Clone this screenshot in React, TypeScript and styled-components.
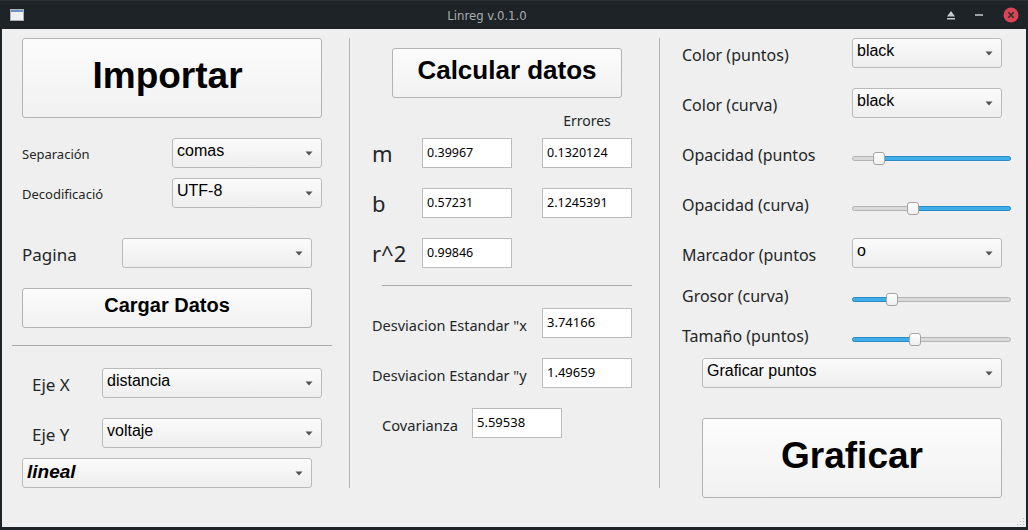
import React from "react";
import styled, { createGlobalStyle } from "styled-components";

const Global = createGlobalStyle`
  html, body { margin: 0; padding: 0; background: #1d2326; }
  body { width: 1028px; height: 530px; overflow: hidden; }
  * { box-sizing: border-box; }
`;

const Window = styled.div`
  width: 1028px;
  height: 530px;
  display: flex;
  flex-direction: column;
  background: #1d2326;
`;

const TitleBar = styled.div`
  height: 29px;
  flex-shrink: 0;
  display: flex;
  align-items: center;
  border-top: 1px solid #2a3034;
`;

const TitleIconBox = styled.div`
  width: 30px;
  display: flex;
  align-items: center;
  padding-left: 10px;
`;

const TitleText = styled.div`
  flex: 1;
  text-align: center;
  font-family: "DejaVu Sans Condensed", "DejaVu Sans", sans-serif;
  font-stretch: condensed;
  font-size: 13px;
  color: #a8adb1;
`;

const TitleButtons = styled.div`
  width: 84px;
  display: flex;
  align-items: center;
  padding-left: 2px;
`;

const TBIcon = styled.svg<{ $ml: number }>`
  margin-left: ${(p) => p.$ml}px;
  display: block;
  flex-shrink: 0;
`;

const Body = styled.div`
  margin: 0 2px 3px 2px;
  height: 498px;
  background: #efefef;
  display: flex;
  align-items: flex-start;
  position: relative;
  font-family: "Noto Sans", sans-serif;
  color: #232627;
`;

const Column = styled.div<{ $w: number }>`
  width: ${(p) => p.$w}px;
  flex-shrink: 0;
  display: flex;
  flex-direction: column;
  align-items: flex-start;
`;

const VDivider = styled.div`
  width: 1px;
  height: 450px;
  margin-top: 9px;
  background: #b4b4b4;
  flex-shrink: 0;
`;

const HLine = styled.div<{ $mt: number; $ml: number; $w: number }>`
  height: 1px;
  width: ${(p) => p.$w}px;
  margin-top: ${(p) => p.$mt}px;
  margin-left: ${(p) => p.$ml}px;
  background: #a9a9a9;
  flex-shrink: 0;
`;

const PushButton = styled.div<{ $w: number; $h: number; $size: number; $mt: number; $ml: number; $shift?: number }>`
  width: ${(p) => p.$w}px;
  height: ${(p) => p.$h}px;
  margin-top: ${(p) => p.$mt}px;
  margin-left: ${(p) => p.$ml}px;
  flex-shrink: 0;
  border: 1px solid #b3b3b3;
  border-radius: 3px;
  background: linear-gradient(#fcfcfc, #f1f1f1);
  font-family: "Liberation Sans", Arial, sans-serif;
  font-weight: bold;
  font-size: ${(p) => p.$size}px;
  color: #000;
  display: flex;
  align-items: center;
  justify-content: center;
  padding: 0 ${(p) => p.$shift ?? 0}px 5px 0;
`;

const Row = styled.div<{ $mt: number; $pl: number }>`
  display: flex;
  align-items: center;
  height: 30px;
  margin-top: ${(p) => p.$mt}px;
  padding-left: ${(p) => p.$pl}px;
  flex-shrink: 0;
`;

const Label = styled.span<{ $w: number; $size: number; $dy?: number }>`
  width: ${(p) => p.$w}px;
  font-size: ${(p) => p.$size}px;
  padding-top: ${(p) => p.$dy ?? 0}px;
  white-space: nowrap;
  overflow: hidden;
  flex-shrink: 0;
`;

const ComboBox = styled.div<{ $w: number; $mt?: number; $ml?: number }>`
  width: ${(p) => p.$w}px;
  height: 30px;
  margin-top: ${(p) => p.$mt ?? 0}px;
  margin-left: ${(p) => p.$ml ?? 0}px;
  flex-shrink: 0;
  border: 1px solid #bababa;
  border-radius: 3px;
  background: linear-gradient(#fbfbfb, #eeeeee);
  display: flex;
  align-items: flex-start;
`;

const ComboText = styled.span<{ $emph?: boolean }>`
  flex: 1;
  padding: 3px 0 0 4px;
  font-family: "Liberation Sans", Arial, sans-serif;
  font-size: ${(p) => (p.$emph ? 19 : 16)}px;
  font-weight: ${(p) => (p.$emph ? "bold" : "normal")};
  font-style: ${(p) => (p.$emph ? "italic" : "normal")};
  line-height: ${(p) => (p.$emph ? 20 : 18)}px;
  color: #000;
  white-space: nowrap;
`;

const ComboArrow = styled.svg`
  align-self: center;
  margin-right: 8px;
  flex-shrink: 0;
`;

const Field = styled.div<{ $size: number; $ml?: number }>`
  width: 90px;
  height: 30px;
  margin-left: ${(p) => p.$ml ?? 0}px;
  flex-shrink: 0;
  border: 1px solid #bcbcbc;
  background: #fff;
  padding: 0 0 2px 4px;
  display: flex;
  align-items: center;
  font-size: ${(p) => p.$size}px;
  color: #000;
`;

const ErrHeader = styled.div`
  margin-top: 12px;
  height: 20px;
  padding-left: 192px;
  display: flex;
  align-items: center;
  flex-shrink: 0;
`;

const ErrText = styled.span`
  width: 90px;
  text-align: center;
  font-size: 14px;
`;

const SliderBox = styled.div`
  position: relative;
  width: 159px;
  height: 13px;
  margin-top: 6px;
  display: flex;
  align-items: center;
  flex-shrink: 0;
`;

const Groove = styled.div`
  flex: 1;
  height: 5px;
  border: 1px solid #b3b3b3;
  border-radius: 3px;
  background: #d9d9d9;
  position: relative;
`;

const GrooveFill = styled.div<{ $left: number; $width: number }>`
  position: absolute;
  top: -1px;
  bottom: -1px;
  left: ${(p) => p.$left}px;
  width: ${(p) => p.$width}px;
  background: #3daee9;
  border: 1px solid #2b8ac4;
  border-radius: 3px;
`;

const Handle = styled.div<{ $x: number }>`
  position: absolute;
  top: 0;
  left: ${(p) => p.$x - 6}px;
  width: 12px;
  height: 13px;
  border: 1px solid #a4a4a4;
  border-radius: 3px;
  background: linear-gradient(#ffffff, #efefef);
`;

const Grip = styled.svg`
  position: absolute;
  right: 1px;
  bottom: 1px;
`;

const Arrow = () => (
  <ComboArrow width="8" height="5" viewBox="0 0 8 5">
    <path d="M0.5 0.5 H7.5 L4 4.5 Z" fill="#505355" />
  </ComboArrow>
);

const Combo: React.FC<{ w: number; text: string; emph?: boolean; mt?: number; ml?: number }> = ({ w, text, emph, mt, ml }) => (
  <ComboBox $w={w} $mt={mt} $ml={ml}>
    <ComboText $emph={emph}>{text}</ComboText>
    <Arrow />
  </ComboBox>
);

const Slider: React.FC<{ pos: number; fill: "left" | "right" }> = ({ pos, fill }) => {
  const total = 159;
  const left = fill === "left" ? 0 : pos;
  const width = fill === "left" ? pos : total - pos;
  return (
    <SliderBox>
      <Groove>
        <GrooveFill $left={left - 1} $width={width} />
      </Groove>
      <Handle $x={pos} />
    </SliderBox>
  );
};

export default function App() {
  return (
    <>
      <Global />
      <Window>
        <TitleBar>
          <TitleIconBox>
            <svg width="14" height="12" viewBox="0 0 14 12">
              <rect x="0.5" y="0.5" width="13" height="11" fill="#eef0f2" stroke="#aab0b6" />
              <rect x="1" y="1" width="12" height="2" fill="#6f8fc8" />
            </svg>
          </TitleIconBox>
          <TitleText>Linreg v.0.1.0</TitleText>
          <TitleButtons>
            <TBIcon $ml={0} width="10" height="10" viewBox="0 0 10 10">
              <path d="M5 1 L9 6.5 H1 Z" fill="#c7cacd" />
              <rect x="1" y="8" width="8" height="1.5" fill="#c7cacd" />
            </TBIcon>
            <TBIcon $ml={19} width="8" height="4" viewBox="0 0 8 4">
              <rect x="0" y="1" width="8" height="2" fill="#9da2a7" />
            </TBIcon>
            <TBIcon $ml={20} width="16" height="16" viewBox="0 0 16 16">
              <circle cx="8" cy="8" r="7.5" fill="#da4453" />
              <path d="M5.3 5.3 L10.7 10.7 M10.7 5.3 L5.3 10.7" stroke="#2b2f33" strokeWidth="1.6" />
            </TBIcon>
          </TitleButtons>
        </TitleBar>
        <Body>
          <Column $w={347}>
            <PushButton $w={300} $h={80} $size={37} $mt={9} $ml={20} $shift={9}>Importar</PushButton>
            <Row $mt={20} $pl={20}>
              <Label $w={150} $size={13} $dy={2}>Separación</Label>
              <Combo w={150} text="comas" />
            </Row>
            <Row $mt={10} $pl={20}>
              <Label $w={150} $size={13} $dy={2}>Decodificació</Label>
              <Combo w={150} text="UTF-8" />
            </Row>
            <Row $mt={30} $pl={20}>
              <Label $w={100} $size={17} $dy={2}>Pagina</Label>
              <Combo w={190} text="" />
            </Row>
            <PushButton $w={290} $h={40} $size={20} $mt={20} $ml={20}>Cargar Datos</PushButton>
            <HLine $mt={17} $ml={10} $w={320} />
            <Row $mt={22} $pl={30}>
              <Label $w={70} $size={17} $dy={2}>Eje X</Label>
              <Combo w={220} text="distancia" />
            </Row>
            <Row $mt={20} $pl={30}>
              <Label $w={70} $size={17} $dy={2}>Eje Y</Label>
              <Combo w={220} text="voltaje" />
            </Row>
            <Combo w={290} text="lineal" emph mt={10} ml={20} />
          </Column>
          <VDivider />
          <Column $w={309}>
            <PushButton $w={230} $h={50} $size={26} $mt={19} $ml={42}>Calcular datos</PushButton>
            <ErrHeader>
              <ErrText>Errores</ErrText>
            </ErrHeader>
            <Row $mt={8} $pl={22}>
              <Label $w={50} $size={22}>m</Label>
              <Field $size={12.5}>0.39967</Field>
              <Field $size={12.5} $ml={30}>0.1320124</Field>
            </Row>
            <Row $mt={20} $pl={22}>
              <Label $w={50} $size={22}>b</Label>
              <Field $size={12.5}>0.57231</Field>
              <Field $size={12.5} $ml={30}>2.1245391</Field>
            </Row>
            <Row $mt={20} $pl={22}>
              <Label $w={50} $size={22}>r^2</Label>
              <Field $size={12.5}>0.99846</Field>
            </Row>
            <HLine $mt={17} $ml={32} $w={250} />
            <Row $mt={22} $pl={22}>
              <Label $w={170} $size={14.5} $dy={3}>Desviacion Estandar "x</Label>
              <Field $size={13}>3.74166</Field>
            </Row>
            <Row $mt={20} $pl={22}>
              <Label $w={170} $size={14.5} $dy={3}>Desviacion Estandar "y</Label>
              <Field $size={13}>1.49659</Field>
            </Row>
            <Row $mt={20} $pl={32}>
              <Label $w={90} $size={14.7} $dy={3}>Covarianza</Label>
              <Field $size={13}>5.59538</Field>
            </Row>
          </Column>
          <VDivider />
          <Column $w={366}>
            <Row $mt={9} $pl={22}>
              <Label $w={170} $size={16} $dy={4}>Color (puntos)</Label>
              <Combo w={150} text="black" />
            </Row>
            <Row $mt={20} $pl={22}>
              <Label $w={170} $size={16} $dy={4}>Color (curva)</Label>
              <Combo w={150} text="black" />
            </Row>
            <Row $mt={22} $pl={22}>
              <Label $w={170} $size={16}>Opacidad (puntos</Label>
              <Slider pos={27} fill="right" />
            </Row>
            <Row $mt={20} $pl={22}>
              <Label $w={170} $size={16}>Opacidad (curva)</Label>
              <Slider pos={61} fill="right" />
            </Row>
            <Row $mt={18} $pl={22}>
              <Label $w={170} $size={16} $dy={4}>Marcador (puntos</Label>
              <Combo w={150} text="o" />
            </Row>
            <Row $mt={13} $pl={22}>
              <Label $w={170} $size={16}>Grosor (curva)</Label>
              <Slider pos={40} fill="left" />
            </Row>
            <Row $mt={10} $pl={22}>
              <Label $w={170} $size={16}>Tamaño (puntos)</Label>
              <Slider pos={63} fill="left" />
            </Row>
            <Combo w={300} text="Graficar puntos" mt={7} ml={42} />
            <PushButton $w={300} $h={80} $size={37} $mt={30} $ml={42}>Graficar</PushButton>
          </Column>
          <Grip width="10" height="10" viewBox="0 0 10 10">
            <g fill="#b5b5b5">
              <rect x="8" y="2" width="1" height="1" />
              <rect x="5" y="5" width="1" height="1" />
              <rect x="8" y="5" width="1" height="1" />
              <rect x="2" y="8" width="1" height="1" />
              <rect x="5" y="8" width="1" height="1" />
              <rect x="8" y="8" width="1" height="1" />
            </g>
          </Grip>
        </Body>
      </Window>
    </>
  );
}
